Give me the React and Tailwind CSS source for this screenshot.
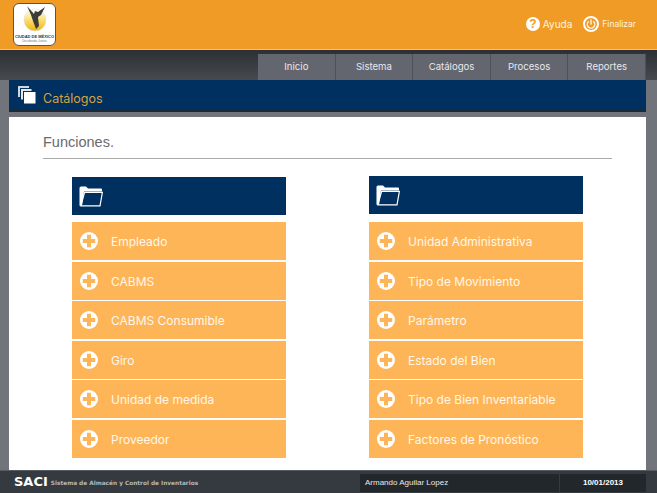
import { Power } from 'lucide-react';

const leftItems = ['Empleado', 'CABMS', 'CABMS Consumible', 'Giro', 'Unidad de medida', 'Proveedor'];
const rightItems = ['Unidad Administrativa', 'Tipo de Movimiento', 'Parámetro', 'Estado del Bien', 'Tipo de Bien Inventariable', 'Factores de Pronóstico'];
const menu = ['Inicio', 'Sistema', 'Catálogos', 'Procesos', 'Reportes'];

function FolderIcon() {
    return (
        <svg width="24" height="21" viewBox="0 0 24 21" className="block">
            <path d="M0.5 19.8V2Q0.5 0.5 2 0.5H7L9 2.5H22Q23 2.5 23 3.5V5.5H5L3 19.8Z" fill="#fff" />
            <path d="M5.6 6.3H23.4L21 19.9H1.9Z" fill="none" stroke="#fff" strokeWidth="1.2" />
        </svg>
    );
}

function PlusIcon() {
    return (
        <svg width="18" height="18" viewBox="0 0 18 18" className="block shrink-0">
            <circle cx="9" cy="9" r="9" fill="#fff" />
            <path d="M7 2.8H11V7H15.2V11H11V15.2H7V11H2.8V7H7Z" fill="#fdb557" />
        </svg>
    );
}

function PagesIcon() {
    return (
        <svg width="18" height="18" viewBox="0 0 18 18" className="block">
            <rect x="0" y="0" width="11" height="11" fill="#cfd6de" />
            <rect x="2.5" y="2.5" width="11.5" height="11.5" fill="#e4e8ec" stroke="#00305f" strokeWidth="1" />
            <rect x="5.5" y="5.5" width="12.5" height="12.5" fill="#fff" stroke="#00305f" strokeWidth="1" />
        </svg>
    );
}

function Logo() {
    return (
        <div className="w-[43px] h-[43px] rounded-md border border-[#555] bg-white flex flex-col items-center overflow-hidden">
            <svg width="32" height="30" viewBox="0 0 32 30" className="block">
                <defs>
                    <linearGradient id="sol" x1="0" y1="0" x2="0" y2="1">
                        <stop offset="0" stopColor="#fff" />
                        <stop offset="0.45" stopColor="#fbe27a" />
                        <stop offset="1" stopColor="#f0b40a" />
                    </linearGradient>
                </defs>
                <circle cx="16" cy="16" r="11" fill="url(#sol)" stroke="#e2e2e2" strokeWidth="0.6" />
                <path d="M8 2L15 10L16 7L19 8L26 3L22 11L19 13L20 22L17 25L14 17L12 11Z" fill="#3b3b3b" />
            </svg>
            <div className="text-[4px] leading-[5px] font-bold text-[#333] whitespace-nowrap font-['Liberation_Sans',sans-serif]">CIUDAD DE MÉXICO</div>
            <div className="text-[3px] leading-[4px] text-[#777] whitespace-nowrap font-['Liberation_Sans',sans-serif]">Decidiendo Juntos</div>
        </div>
    );
}

function Column({ items, className, headClassName }) {
    return (
        <div className={`w-[214px] flex flex-col ${className}`}>
            <div className={`h-[38px] bg-[#00305f] flex items-center pl-[7px] ${headClassName}`}>
                <FolderIcon />
            </div>
            <div className="flex flex-col gap-[1.6px]">
                {items.map((item) => (
                    <div key={item} className="h-[38px] bg-[#fdb557] flex items-center pl-[8px] gap-[13px] text-[#fff7ea] text-[12px] font-['Inter',sans-serif]">
                        <PlusIcon />
                        <span className="pt-[2px]">{item}</span>
                    </div>
                ))}
            </div>
        </div>
    );
}

function App() {
    return (
        <div className="w-[657px] h-[493px] flex flex-col overflow-hidden bg-[#72747b] font-['Inter',sans-serif]">
            {/* encabezado */}
            <header className="h-[50px] bg-[#f09b25] flex items-start justify-between pt-[3px] pl-[13px] pr-[21px] shrink-0 border-b border-[#f7c06f]">
                <Logo />
                <div className="flex items-center gap-[11px] text-[#fff3e0] text-[10px] pt-[13px]">
                    <div className="flex items-center gap-[3px]">
                        <span className="w-[14px] h-[14px] rounded-full bg-white text-[#f09b25] flex items-center justify-center font-bold text-[12px] font-['Liberation_Sans',sans-serif]">?</span>
                        <span>Ayuda</span>
                    </div>
                    <div className="flex items-center gap-[3px]">
                        <span className="w-[16px] h-[16px] rounded-full border-2 border-white flex items-center justify-center">
                            <Power size={10} color="#fff" strokeWidth={3} />
                        </span>
                        <span className="text-[8.5px]">Finalizar</span>
                    </div>
                </div>
            </header>

            {/* menu */}
            <nav className="h-[30px] bg-gradient-to-b from-[#2c3035] to-[#474b50] flex justify-end items-end pr-[11px] shrink-0">
                {menu.map((item) => (
                    <div key={item} className="w-[77.6px] h-[26px] bg-[#63666f] border-r border-[#4d5057] flex items-center justify-center text-[#e8e8ea] text-[9.6px]">
                        {item}
                    </div>
                ))}
            </nav>

            {/* titulo */}
            <div className="h-[32px] ml-[9px] mr-[11px] bg-[#00305f] border-b-2 border-[#1c2a38] flex items-center pl-[9px] gap-[7px] shrink-0">
                <PagesIcon />
                <span className="text-[#d8a240] text-[12.5px] pt-[9px]">Catálogos</span>
            </div>

            {/* contenido */}
            <main className="mt-[5px] ml-[9px] mr-[11px] flex-1 bg-white pl-[34px] pr-[34px] pt-[16px]">
                <div className="h-[26px] border-b border-[#aaa] text-[#6a6a70] text-[14.5px] leading-[18px] font-['Liberation_Sans',sans-serif]">Funciones.</div>
                <div className="flex pl-[29px] pt-[18px]">
                    <Column items={leftItems} className="" headClassName="mb-[7px]" />
                    <Column items={rightItems} className="ml-[83px] -mt-[1px]" headClassName="mb-[8px]" />
                </div>
            </main>

            {/* pie */}
            <footer className="h-[23px] bg-[#343a40] border-t border-[#555a60] flex items-center pl-[14px] shrink-0">
                <span className="text-white font-bold text-[13px] font-['DejaVu_Sans',sans-serif]">SACI</span>
                <span className="ml-[3px] mt-[3px] text-[#b4b8bc] font-bold text-[5.8px] font-['DejaVu_Sans',sans-serif]">Sistema de Almacén y Control de Inventarios</span>
                <div className="ml-auto flex h-[18px] mt-[1px] mr-[11px] text-[8px] font-['Liberation_Sans',sans-serif]">
                    <div className="w-[199px] bg-[#22272c] flex items-center pl-[5px] text-[#e8e8e8]">Armando Aguilar Lopez</div>
                    <div className="w-[86px] ml-[1px] bg-[#22272c] flex items-center justify-center text-white font-bold">10/01/2013</div>
                </div>
            </footer>
        </div>
    );
}

export default App;
